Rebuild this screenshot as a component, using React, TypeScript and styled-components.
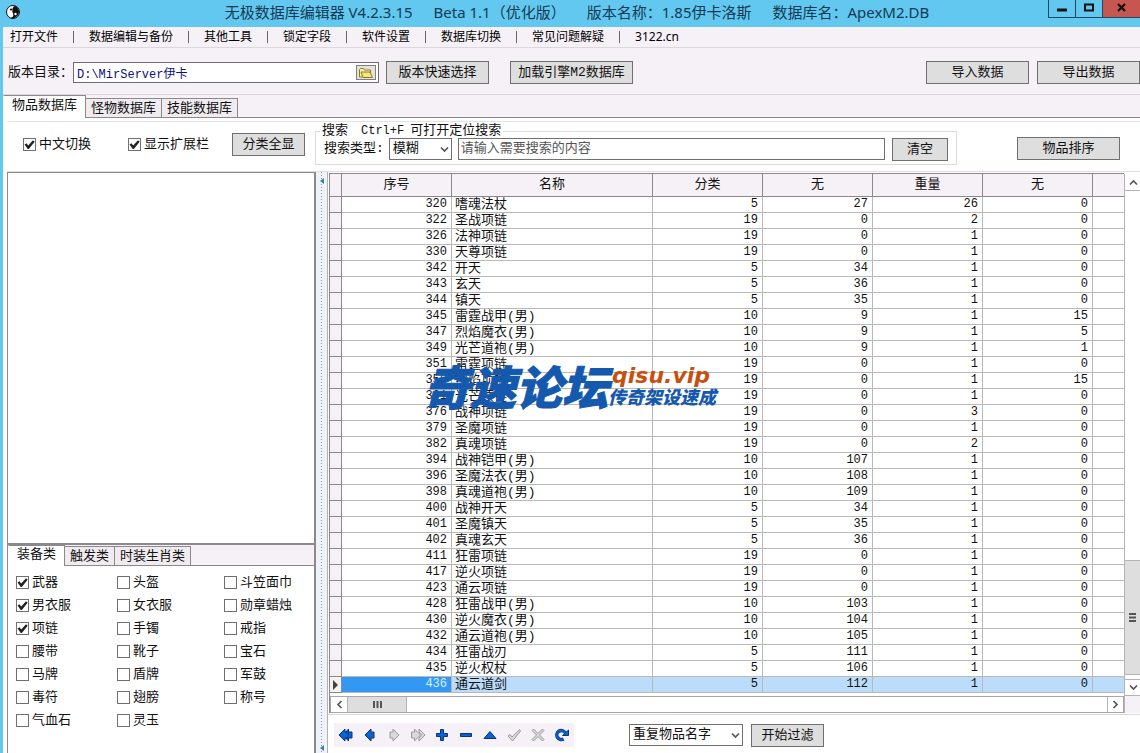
import React from 'react';
import styled, { createGlobalStyle, css } from 'styled-components';

const LINE = '#8c898d';
const PANEL = '#f6f1f6';
const SONG = '"Liberation Mono", "Noto Sans CJK SC", monospace';

const Global = createGlobalStyle`
  * { box-sizing: border-box; }
  body { margin: 0; background: #fff; }
  button, input, select { font: inherit; color: inherit; margin: 0; border-radius: 0; }
`;

const Window = styled.div`
  position: relative;
  display: flex;
  flex-direction: column;
  min-height: 100vh;
  overflow: hidden;
  background: #62c8ef;
  color: #111;
  font: 13px/16px ${SONG};
`;

const TitleBar = styled.header`
  position: relative;
  display: flex;
  align-items: center;
  height: 27px;
  padding: 0 6px 3px;
  svg { flex: none; }
`;

const Title = styled.h1`
  display: flex;
  justify-content: center;
  flex: 1;
  gap: 21px;
  margin: 0;
  white-space: nowrap;
  color: #143a55;
  font: 15px/20px "Noto Sans", "Noto Sans CJK SC", sans-serif;
`;

const WindowButtons = styled.div`
  position: absolute;
  top: 0;
  right: 0;
  display: flex;
`;

const WindowButton = styled.button<{ $close?: boolean }>`
  display: flex;
  justify-content: center;
  align-items: center;
  width: ${p => (p.$close ? 38 : 27)}px;
  height: 18px;
  padding: 0 0 3px;
  border: solid #1d4a61;
  border-width: 0 0 1px 1px;
  background: ${p => (p.$close ? '#c75550' : 'transparent')};
`;

const Body = styled.div`
  display: flex;
  flex-direction: column;
  flex: 1;
  margin-left: 3px;
  background: #fff;
`;

const MenuBar = styled.nav`
  display: flex;
  align-items: center;
  height: 21px;
  padding-left: 7px;
  background: ${PANEL};
  border-bottom: 1px solid #dcd7dc;
  font: 12px/16px "Noto Sans", "Noto Sans CJK SC", sans-serif;
`;

const MenuItem = styled.a`
  color: #000;
  text-decoration: none;
  white-space: nowrap;
  & + &::before {
    content: '';
    display: inline-block;
    width: 1px;
    height: 12px;
    margin: 0 15px;
    background: #666;
    vertical-align: -2px;
  }
`;

const Toolbar = styled.div`
  display: flex;
  align-items: center;
  height: 47px;
  padding-left: 5px;
  padding-top: 3px;
  background: ${PANEL};
  border-bottom: 1px solid #dcd7dc;
  white-space: nowrap;
`;

const PathBox = styled.div`
  display: flex;
  align-items: center;
  width: 306px;
  height: 21px;
  padding-right: 2px;
  border: 1px solid #6e6e72;
  background: #fff;
`;

const PathInput = styled.input`
  flex: 1;
  min-width: 0;
  height: 19px;
  padding: 0 3px;
  border: 0;
  background: transparent;
  color: #10107c;
  font-size: 12px;
`;

const FolderButton = styled.button`
  display: flex;
  align-items: center;
  justify-content: center;
  width: 20px;
  height: 15px;
  padding: 0;
  border: 1px solid #808080;
  background: #e4e2da;
`;

const Button = styled.button<{ $w: number; $ml?: number }>`
  flex: none;
  width: ${p => p.$w}px;
  height: 23px;
  margin-left: ${p => p.$ml ?? 0}px;
  padding: 1px 0 0;
  border: 1px solid #707070;
  background: #dedede;
  line-height: 16px;
  white-space: nowrap;
`;

const Spacer = styled.div`flex: 1;`;

const Tabs = styled.div<{ $h: number }>`
  display: flex;
  align-items: flex-end;
  height: ${p => p.$h}px;
  background: ${PANEL};
  box-shadow: inset 0 -1px ${LINE};
`;

const Tab = styled.button<{ $active?: boolean }>`
  height: 20px;
  padding: 2px 5px 0;
  border: 1px solid ${LINE};
  background: #efebef;
  line-height: 16px;
  & + & { margin-left: -1px; }
  ${p => p.$active && css`
    align-self: stretch;
    height: auto;
    padding: 0 8px 2px;
    background: #fff;
    border-color: ${LINE} ${LINE} #fff #fff;
  `}
`;

const Filters = styled.form`
  display: flex;
  align-items: flex-start;
  height: 50px;
  margin-left: 4px;
  padding-top: 2px;
  border-bottom: 1px solid #dedede;
  white-space: nowrap;
`;

const Rule = styled.div`
  height: 1px;
  margin: 3px 0 0 4px;
  background: #e0e4e2;
`;

const Group = styled.div<{ $ml: number; $mr?: number; $mt: number }>`
  display: flex;
  align-items: center;
  margin: ${p => p.$mt}px ${p => p.$mr ?? 0}px 0 ${p => p.$ml}px;
`;

const CheckLabel = styled.label<{ $w?: number }>`
  display: flex;
  align-items: center;
  gap: 3px;
  width: ${p => (p.$w ? `${p.$w}px` : 'auto')};
  height: 23px;
  white-space: nowrap;
`;

const CheckBox = styled.input`
  appearance: none;
  flex: none;
  width: 13px;
  height: 13px;
  border: 1px solid #707070;
  background: #fff;
  &:checked::after {
    content: '';
    display: block;
    width: 11px;
    height: 11px;
    background: #222;
    clip-path: polygon(5% 50%, 22% 38%, 38% 58%, 82% 12%, 97% 24%, 44% 90%, 34% 90%);
  }
`;

const SearchBox = styled.fieldset`
  flex: 1;
  min-width: 0;
  height: 41px;
  margin: 0 0 0 10px;
  padding: 0 8px 0 4px;
  border: 1px solid #dcdcdc;
  legend { height: 14px; padding: 0 2px; line-height: 14px; }
  kbd { font: 12px/14px ${SONG}; margin: 0 6px 0 13px; }
`;

const SearchRow = styled.div`
  display: flex;
  align-items: center;
  height: 22px;
  padding-left: 4px;
`;

const SelectBox = styled.span<{ $w: number; $ml: number }>`
  position: relative;
  flex: none;
  display: flex;
  width: ${p => p.$w}px;
  height: 22px;
  margin-left: ${p => p.$ml}px;
  select {
    appearance: none;
    width: 100%;
    padding: 0 3px;
    border: 1px solid #707070;
    background: #fff;
  }
  svg { position: absolute; right: 3px; top: 7px; pointer-events: none; }
`;

const SearchInput = styled.input`
  flex: 1;
  min-width: 0;
  height: 22px;
  margin: 0 7px 0 6px;
  padding: 0 2px 2px;
  border: 1px solid #707070;
  &::placeholder { color: #555; opacity: 1; }
`;

const Main = styled.main`
  display: flex;
  flex: 1;
  margin-left: 4px;
`;

const Side = styled.aside`
  display: flex;
  flex-direction: column;
  flex: none;
  width: 309px;
  border: solid ${LINE};
  border-width: 1px 2px 0 1px;
`;

const ListArea = styled.div`
  flex: 1;
  border-bottom: 2px solid ${LINE};
`;

const CheckGrid = styled.div`
  display: grid;
  grid-template-columns: 101px 107px 1fr;
  grid-auto-rows: 23px;
  height: 188px;
  padding: 5px 0 0 8px;
`;

const Splitter = styled.div`
  display: flex;
  flex-direction: column;
  justify-content: space-between;
  align-items: center;
  width: 12px;
  padding: 6px 0 3px;
  border-right: 1px solid #b4b1b5;
  background: repeating-linear-gradient(#7f9cb8 0 1px, transparent 1px 3px) 5px 0 / 1px 100% no-repeat, #eff2f6;
`;

const Right = styled.section`
  display: flex;
  flex-direction: column;
  flex: 1;
  min-width: 0;
`;

const GridFrame = styled.div`
  display: flex;
  flex: 1;
`;

const GridColumn = styled.div`
  flex: 1;
  min-width: 0;
  display: flex;
  flex-direction: column;
  border-top: 1px solid ${LINE};
  border-left: 1px solid ${LINE};
  margin: 1px 0 0 1px;
`;

const Grid = styled.table`
  width: 100%;
  table-layout: fixed;
  border-collapse: separate;
  border-spacing: 0;
  th {
    height: 23px;
    padding: 0;
    border: solid ${LINE};
    border-width: 0 1px 1px 0;
    background: ${PANEL};
    font-weight: 400;
  }
  th:last-child { border-right: 0; }
  tbody th { height: 16px; line-height: 15px; }
  tbody th svg { display: block; margin: auto; }
`;

const Cell = styled.td<{ $name?: boolean }>`
  height: 16px;
  padding: 0 4px 0 3px;
  border: solid #b9b9b9;
  border-width: 0 1px 1px 0;
  text-align: ${p => (p.$name ? 'left' : 'right')};
  font-size: ${p => (p.$name ? 13 : 12)}px;
  line-height: 15px;
  white-space: nowrap;
  color: #111;
  &:last-child { border-right: 0; }
  tr[aria-selected='true'] > & { background: #bbdcfa; }
  tr[aria-selected='true'] > &:nth-child(2) { background: #3398f2; color: #d9efff; }
`;

const GridTail = styled.div`
  min-height: 3px;
  flex: 1;
`;

const HScroll = styled.div`
  display: flex;
  height: 17px;
  border: 1px solid #aaa6a6;
`;

const VScroll = styled.div`
  display: flex;
  flex-direction: column;
  width: 16px;
  margin-top: 2px;
  border-left: 1px solid #b4b4b4;
`;

const ScrollButton = styled.button<{ $edge?: 'top' | 'bottom' | 'left' }>`
  display: flex;
  align-items: center;
  justify-content: center;
  flex: none;
  width: 16px;
  height: 15px;
  padding: 0;
  border: 0 solid #b4b4b4;
  background: #fff;
  ${p => p.$edge === 'left' && css`border-left-width: 1px;`}
  ${p => p.$edge === 'top' && css`height: 17px; border-width: 1px 0;`}
  ${p => p.$edge === 'bottom' && css`height: 17px; border-bottom-width: 1px;`}
`;

const Thumb = styled.div<{ $vertical?: boolean }>`
  display: flex;
  align-items: center;
  justify-content: center;
  background: #dedede;
  border: solid #b4b4b4;
  ${p => (p.$vertical
    ? css`height: 115px; border-width: 1px 0; margin-bottom: 4px;`
    : css`width: 60px; border-width: 0 1px;`)}
`;

const Corner = styled.div`
  height: 17px;
  background: ${PANEL};
`;

const Footer = styled.footer`
  display: flex;
  align-items: center;
  height: 40px;
  padding-left: 6px;
  margin-top: 1px;
  border: solid #d6d9dd;
  border-width: 1px 0;
  padding-top: 2px;
`;

const Navigator = styled.div`
  display: flex;
  height: 24px;
  background: ${PANEL};
`;

const NavButton = styled.button`
  display: flex;
  align-items: center;
  justify-content: center;
  width: 24px;
  padding: 0;
  border: 0;
  background: transparent;
`;

const Watermark = styled.div`
  position: absolute;
  top: 362px;
  left: 50%;
  display: flex;
  transform: translateX(-50%);
  color: #1459ad;
  font: italic 900 46px/46px "Noto Sans CJK SC", sans-serif;
  white-space: nowrap;
  pointer-events: none;
  -webkit-text-stroke: 1px #1459ad;
`;

const WatermarkSide = styled.div`
  display: flex;
  flex-direction: column;
  padding-top: 4px;
  font-size: 18px;
  line-height: 20px;
  -webkit-text-stroke: 0;
  b { padding-left: 4px; color: #c8500f; font: italic 900 22px/20px "DejaVu Sans", sans-serif; }
`;

const Chevron = ({ dir = 0 }: { dir?: number }) => (
  <svg width="9" height="9" viewBox="0 0 9 9" fill="none" stroke="#555" strokeWidth="1.7">
    <path d="M1 2.5 4.5 6 8 2.5" transform={`rotate(${dir} 4.5 4.5)`} />
  </svg>
);

const Grip = ({ turn = 0 }: { turn?: number }) => (
  <svg width="9" height="9" viewBox="0 0 9 9" stroke="#555" strokeWidth="2">
    <path d="M1 1v7M4.500 1v7M8 1v7" transform={`rotate(${turn} 4.5 4.5)`} />
  </svg>
);

const SplitArrow = () => (
  <svg width="4" height="6" viewBox="0 0 4 6"><path d="M4 0v6L0 3z" fill="#3e7fb0" /></svg>
);

const on = { fill: '#0b63d2', stroke: '#06357d', strokeWidth: 1 };
const off = { fill: '#d9d9d9', stroke: '#9a9a9a', strokeWidth: 1 };
const navIcons: [string, React.ReactNode][] = [
  ['首条', <g {...on}><path d="M10.500 2v3H14v6h-3.500v3L5 8z" /><path d="M7 2v3h3v6H7v3L1 8z" /></g>],
  ['上一条', <path {...on} d="M9 2v3h3v6H9v3L3 8z" />],
  ['下一条', <path {...off} d="M7 2v3H4v6h3v3l6-6z" />],
  ['末条', <g {...off}><path d="M4.500 2v3H1.500v6h3v3l6-6z" /><path d="M9 2v3l2.500 3L9 11v3l6-6z" /></g>],
  ['插入', <path {...on} d="M6.500 2.500h3v4h4v3h-4v4h-3v-4h-4v-3h4z" />],
  ['删除', <path {...on} d="M2.500 6.500h11v3h-11z" />],
  ['编辑', <path {...on} d="M8 4.500 14 11.500H2z" />],
  ['提交', <path {...off} d="M2 9l2-1.500 2 2.500 7.500-7.500L14.500 4 6.500 14z" />],
  ['取消', <path {...off} d="M2 3.500 3.500 2 8 6.500 12.500 2 14 3.500 9.500 8l4.500 4.500-1.500 1.500L8 9.500 3.500 14 2 12.500 6.500 8z" />],
  ['刷新', <g><path d="M9.500 12A4.500 4.500 0 1 1 11 5.500" fill="none" stroke="#06357d" strokeWidth="3.500" /><path d="M9.500 12A4.500 4.500 0 1 1 11 5.500" fill="none" stroke="#0b63d2" strokeWidth="2" /><path {...on} d="M8.500 8.500h6V3z" /></g>],
];

const menu = ['打开文件', '数据编辑与备份', '其他工具', '锁定字段', '软件设置', '数据库切换', '常见问题解疑', '3122.cn'];

const categories: [string, boolean?][] = [
  ['武器', true], ['头盔'], ['斗笠面巾'],
  ['男衣服', true], ['女衣服'], ['勋章蜡烛'],
  ['项链', true], ['手镯'], ['戒指'],
  ['腰带'], ['靴子'], ['宝石'],
  ['马牌'], ['盾牌'], ['军鼓'],
  ['毒符'], ['翅膀'], ['称号'],
  ['气血石'], ['灵玉'],
];

type Item = [number, string, number, number, number, number];
const items: Item[] = [
  [320, '嗜魂法杖', 5, 27, 26, 0],
  [322, '圣战项链', 19, 0, 2, 0],
  [326, '法神项链', 19, 0, 1, 0],
  [330, '天尊项链', 19, 0, 1, 0],
  [342, '开天', 5, 34, 1, 0],
  [343, '玄天', 5, 36, 1, 0],
  [344, '镇天', 5, 35, 1, 0],
  [345, '雷霆战甲(男)', 10, 9, 1, 15],
  [347, '烈焰魔衣(男)', 10, 9, 1, 5],
  [349, '光芒道袍(男)', 10, 9, 1, 1],
  [351, '雷霆项链', 19, 0, 1, 0],
  [356, '烈焰项链', 19, 0, 1, 15],
  [361, '光芒项链', 19, 0, 1, 0],
  [376, '战神项链', 19, 0, 3, 0],
  [379, '圣魔项链', 19, 0, 1, 0],
  [382, '真魂项链', 19, 0, 2, 0],
  [394, '战神铠甲(男)', 10, 107, 1, 0],
  [396, '圣魔法衣(男)', 10, 108, 1, 0],
  [398, '真魂道袍(男)', 10, 109, 1, 0],
  [400, '战神开天', 5, 34, 1, 0],
  [401, '圣魔镇天', 5, 35, 1, 0],
  [402, '真魂玄天', 5, 36, 1, 0],
  [411, '狂雷项链', 19, 0, 1, 0],
  [417, '逆火项链', 19, 0, 1, 0],
  [423, '通云项链', 19, 0, 1, 0],
  [428, '狂雷战甲(男)', 10, 103, 1, 0],
  [430, '逆火魔衣(男)', 10, 104, 1, 0],
  [432, '通云道袍(男)', 10, 105, 1, 0],
  [434, '狂雷战刃', 5, 111, 1, 0],
  [435, '逆火权杖', 5, 106, 1, 0],
  [436, '通云道剑', 5, 112, 1, 0],
];
const selectedId = 436;

const Check = ({ label, checked, width }: { label: string; checked?: boolean; width?: number }) => (
  <CheckLabel $w={width}>
    <CheckBox type="checkbox" defaultChecked={checked} />
    {label}
  </CheckLabel>
);

export default function App() {
  return (
    <Window>
      <Global />
      <TitleBar>
        <svg width="14" height="14" viewBox="0 0 14 14">
          <circle cx="7" cy="7" r="6.500" fill="#fff" stroke="#111" />
          <path d="M9 .8A6.500 6.500 0 1 1 4 12.800C6.500 13 8 11 7 8.500S5.500 3 9 .8z" fill="#111" />
          <circle cx="5" cy="4.500" r="1.100" fill="#111" />
          <circle cx="9.500" cy="9" r="1.200" fill="#fff" />
        </svg>
        <Title>
          <span>无极数据库编辑器 V4.2.3.15</span>
          <span>Beta 1.1（优化版）</span>
          <span>版本名称：1.85伊卡洛斯</span>
          <span>数据库名：ApexM2.DB</span>
        </Title>
        <WindowButtons>
          <WindowButton aria-label="最小化"><svg width="10" height="10"><path d="M0 8h10" stroke="#111" strokeWidth="3" /></svg></WindowButton>
          <WindowButton aria-label="最大化"><svg width="10" height="9"><path d="M1 1.500h8v6H1z" fill="none" stroke="#111" strokeWidth="2" /></svg></WindowButton>
          <WindowButton $close aria-label="关闭"><svg width="9" height="9"><path d="M1 1l7 7M8 1 1 8" stroke="#111" strokeWidth="2.200" /></svg></WindowButton>
        </WindowButtons>
      </TitleBar>
      <Body>
        <MenuBar>
          {menu.map(m => <MenuItem key={m} href="#">{m}</MenuItem>)}
        </MenuBar>
        <Toolbar>
          <label htmlFor="path">版本目录：</label>
          <PathBox>
            <PathInput id="path" defaultValue="D:\MirServer伊卡" />
            <FolderButton aria-label="浏览">
              <svg width="16" height="12" viewBox="0 0 16 12" stroke="#8a7a2a">
                <path d="M1.500 10V2.500l1-1h3l1 1.500h6V10z" fill="#fbf3a4" />
                <path d="M3 5h9l2.500 5.500H5z" fill="#f3e678" />
              </svg>
            </FolderButton>
          </PathBox>
          <Button $w={103} $ml={7}>版本快速选择</Button>
          <Button $w={123} $ml={21}>加载引擎M2数据库</Button>
          <Spacer />
          <Button $w={103}>导入数据</Button>
          <Button $w={103} $ml={8}>导出数据</Button>
        </Toolbar>
        <Tabs $h={23} role="tablist">
          <Tab role="tab" $active>物品数据库</Tab>
          <Tab role="tab">怪物数据库</Tab>
          <Tab role="tab">技能数据库</Tab>
        </Tabs>
        <Rule />
        <Filters>
          <Group $ml={16} $mt={9}>
            <Check label="中文切换" checked width={105} />
            <Check label="显示扩展栏" checked width={104} />
            <Button type="button" $w={73}>分类全显</Button>
          </Group>
          <SearchBox>
            <legend>搜索<kbd>Ctrl+F</kbd>可打开定位搜索</legend>
            <SearchRow>
              <label htmlFor="mode">搜索类型:</label>
              <SelectBox $w={63} $ml={5}>
                <select id="mode"><option>模糊</option></select>
                <Chevron />
              </SelectBox>
              <SearchInput aria-label="搜索内容" placeholder="请输入需要搜索的内容" />
              <Button type="button" $w={56}>清空</Button>
            </SearchRow>
          </SearchBox>
          <Group $ml={60} $mr={20} $mt={13}>
            <Button type="button" $w={103}>物品排序</Button>
          </Group>
        </Filters>
        <Main>
          <Side>
            <ListArea />
            <Tabs $h={21} role="tablist">
              <Tab role="tab" $active>装备类</Tab>
              <Tab role="tab">触发类</Tab>
              <Tab role="tab">时装生肖类</Tab>
            </Tabs>
            <CheckGrid>
              {categories.map(([label, checked]) => <Check key={label} label={label} checked={checked} />)}
            </CheckGrid>
          </Side>
          <Splitter><SplitArrow /><SplitArrow /></Splitter>
          <Right>
            <GridFrame>
              <GridColumn>
                <Grid>
                  <colgroup>
                    <col width="12" /><col width="110" /><col width="201" /><col width="110" />
                    <col width="110" /><col width="110" /><col width="110" /><col />
                  </colgroup>
                  <thead>
                    <tr>
                      <th /><th>序号</th><th>名称</th><th>分类</th><th>无</th><th>重量</th><th>无</th><th />
                    </tr>
                  </thead>
                  <tbody>
                    {items.map(([id, name, ...rest]) => (
                      <tr key={id} aria-selected={id === selectedId}>
                        <th>
                          {id === selectedId && <svg width="5" height="10"><path d="M0 0v10l5-5z" fill="#444" /></svg>}
                        </th>
                        <Cell>{id}</Cell>
                        <Cell $name>{name}</Cell>
                        {rest.map((v, i) => <Cell key={i}>{v}</Cell>)}
                        <Cell />
                      </tr>
                    ))}
                  </tbody>
                </Grid>
                <GridTail />
                <HScroll>
                  <ScrollButton aria-label="向左"><Chevron dir={90} /></ScrollButton>
                  <Thumb><Grip /></Thumb>
                  <Spacer />
                  <ScrollButton $edge="left" aria-label="向右"><Chevron dir={-90} /></ScrollButton>
                </HScroll>
              </GridColumn>
              <VScroll>
                <ScrollButton $edge="bottom" aria-label="向上"><Chevron dir={180} /></ScrollButton>
                <Spacer />
                <Thumb $vertical><Grip turn={90} /></Thumb>
                <ScrollButton $edge="top" aria-label="向下"><Chevron /></ScrollButton>
                <Corner />
              </VScroll>
            </GridFrame>
            <Footer>
              <Navigator>
                {navIcons.map(([label, icon]) => (
                  <NavButton key={label} aria-label={label}>
                    <svg width="16" height="16" viewBox="0 0 16 16">{icon}</svg>
                  </NavButton>
                ))}
              </Navigator>
              <SelectBox $w={114} $ml={55}>
                <select aria-label="过滤方式"><option>重复物品名字</option></select>
                <Chevron />
              </SelectBox>
              <Button $w={73} $ml={8}>开始过滤</Button>
            </Footer>
          </Right>
        </Main>
      </Body>
      <Watermark>
        <span>奇速论坛</span>
        <WatermarkSide>
          <b>qisu.vip</b>
          <span>传奇架设速成</span>
        </WatermarkSide>
      </Watermark>
    </Window>
  );
}
